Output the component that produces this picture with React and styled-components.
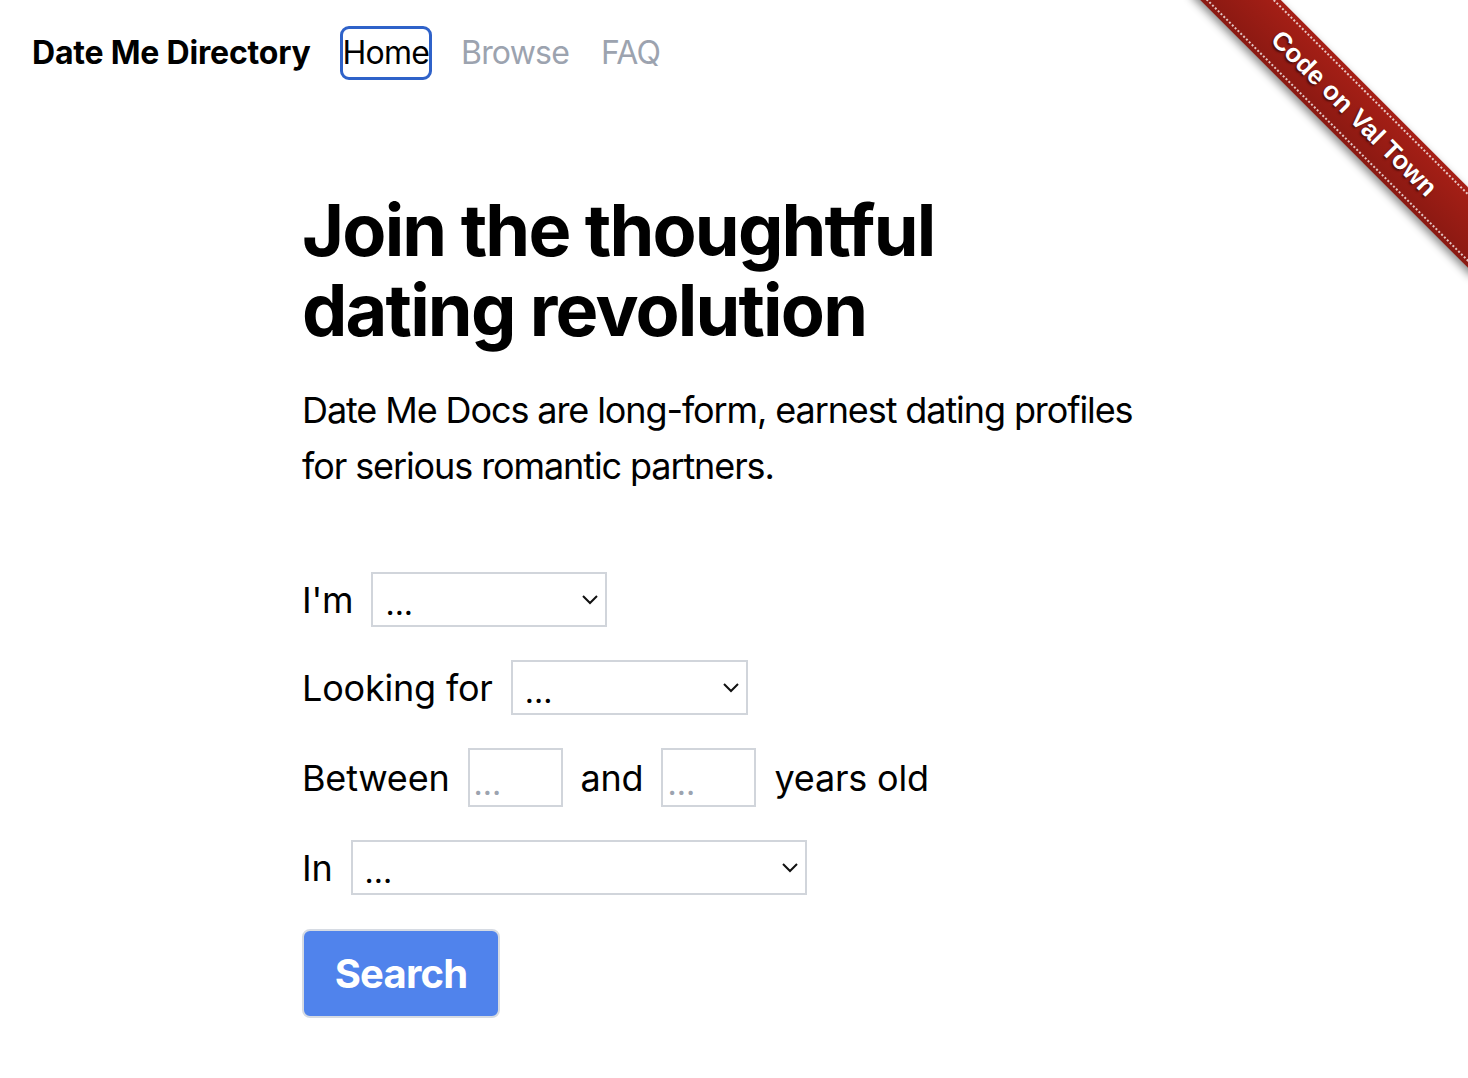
import React from "react";
import styled, { createGlobalStyle } from "styled-components";

const GlobalStyle = createGlobalStyle`
  html, body {
    margin: 0;
    padding: 0;
    background: #ffffff;
    font-family: Inter, "Noto Sans", sans-serif;
    color: #000;
  }
  * { box-sizing: border-box; }
`;

const Page = styled.div`
  position: relative;
  min-height: 1078px;
  overflow: hidden;
`;

const Nav = styled.nav`
  display: flex;
  align-items: center;
  gap: 32px;
  padding: 29px 32px 27px;
  font-size: 32px;
  line-height: 48px;
`;

const Brand = styled.a`
  font-weight: 700;
  color: #000;
  text-decoration: none;
  letter-spacing: -0.2px;
`;

const NavLink = styled.a`
  color: ${(p) => (p.$active ? "#000" : "#9ca3af")};
  text-decoration: none;
  border-radius: 6px;
  letter-spacing: -0.8px;
  outline: ${(p) => (p.$active ? "3px solid #2f62c9" : "none")};
  outline-offset: 0;
`;

const Main = styled.main`
  max-width: 864px;
  margin: 0 auto;
  padding-top: 86px;
`;

const Heading = styled.h1`
  margin: 0;
  font-size: 72px;
  line-height: 80px;
  font-weight: 700;
  letter-spacing: -1.8px;
`;

const Lead = styled.p`
  margin: 32px 0 0;
  font-size: 36px;
  line-height: 56px;
  letter-spacing: -1.1px;
`;

const Form = styled.form`
  margin-top: 78px;
  display: flex;
  flex-direction: column;
  align-items: flex-start;
  gap: 33px;
`;

const Row = styled.div`
  display: flex;
  align-items: center;
  gap: 18px;
  font-size: 36px;
  line-height: 44px;
  letter-spacing: -0.2px;
`;

const SelectWrap = styled.div`
  position: relative;
  display: flex;
  width: ${(p) => p.$w}px;
`;

const Select = styled.select`
  appearance: none;
  width: 100%;
  height: 55px;
  margin: 0;
  border: 2px solid #d1d5db;
  border-radius: 0;
  background: #fff;
  padding: 8px 12px 0;
  font-family: inherit;
  font-size: 32px;
  color: #000;
`;

const Chevron = styled.svg`
  position: absolute;
  right: 8px;
  top: 20px;
  pointer-events: none;
`;

const NumInput = styled.input`
  width: 95px;
  height: 59px;
  margin: 0;
  border: 2px solid #d1d5db;
  padding: 12px 4px 0;
  font-family: inherit;
  font-size: 32px;
  &::placeholder {
    color: #9ca3af;
  }
`;

const SearchButton = styled.button`
  margin-top: 1px;
  width: 198px;
  height: 89px;
  background: #5083ec;
  color: #fff;
  border: 2px solid #d6dbe3;
  border-radius: 8px;
  font-family: inherit;
  font-size: 40px;
  font-weight: 700;
  letter-spacing: -0.8px;
`;

const RibbonClip = styled.div`
  position: absolute;
  top: 0;
  right: 0;
  width: 300px;
  height: 300px;
  overflow: hidden;
  pointer-events: none;
`;

const Ribbon = styled.a`
  position: absolute;
  left: -14px;
  top: 85px;
  width: 400px;
  height: 57px;
  transform: rotate(45deg);
  background: linear-gradient(to bottom, #a61f16, #8a1912);
  box-shadow: 0 4px 8px rgba(0, 0, 0, 0.45);
  display: flex;
  align-items: center;
  justify-content: center;
  color: #fff;
  font-family: "Liberation Sans", Arial, sans-serif;
  font-weight: 700;
  font-size: 26px;
  text-decoration: none;
  text-shadow: 0 2px 2px rgba(0, 0, 0, 0.5);
  &::before,
  &::after {
    content: "";
    position: absolute;
    left: 0;
    right: 0;
    height: 0;
    border-top: 2px dotted rgba(255, 255, 255, 0.75);
  }
  &::before { top: 4px; }
  &::after { bottom: 4px; }
`;

const ChevronIcon = () => (
  <Chevron width="18" height="14" viewBox="0 0 18 14">
    <path d="M2 4 L9 11 L16 4" fill="none" stroke="#111" strokeWidth="2" />
  </Chevron>
);

const Dropdown = ({ w }) => (
  <SelectWrap $w={w}>
    <Select defaultValue="">
      <option value="">...</option>
    </Select>
    <ChevronIcon />
  </SelectWrap>
);

export default function App() {
  return (
    <Page>
      <GlobalStyle />
      <Nav>
        <Brand href="#">Date Me Directory</Brand>
        <NavLink href="#" $active>Home</NavLink>
        <NavLink href="#">Browse</NavLink>
        <NavLink href="#">FAQ</NavLink>
      </Nav>
      <Main>
        <Heading>
          Join the thoughtful
          <br />
          dating revolution
        </Heading>
        <Lead>
          Date Me Docs are long-form, earnest dating profiles
          <br />
          for serious romantic partners.
        </Lead>
        <Form onSubmit={(e) => e.preventDefault()}>
          <Row>
            I'm <Dropdown w={236} />
          </Row>
          <Row>
            Looking for <Dropdown w={237} />
          </Row>
          <Row>
            Between <NumInput placeholder="..." /> and{" "}
            <NumInput placeholder="..." /> years old
          </Row>
          <Row>
            In <Dropdown w={456} />
          </Row>
          <SearchButton type="submit">Search</SearchButton>
        </Form>
      </Main>
      <RibbonClip>
        <Ribbon href="#">Code on Val Town</Ribbon>
      </RibbonClip>
    </Page>
  );
}
